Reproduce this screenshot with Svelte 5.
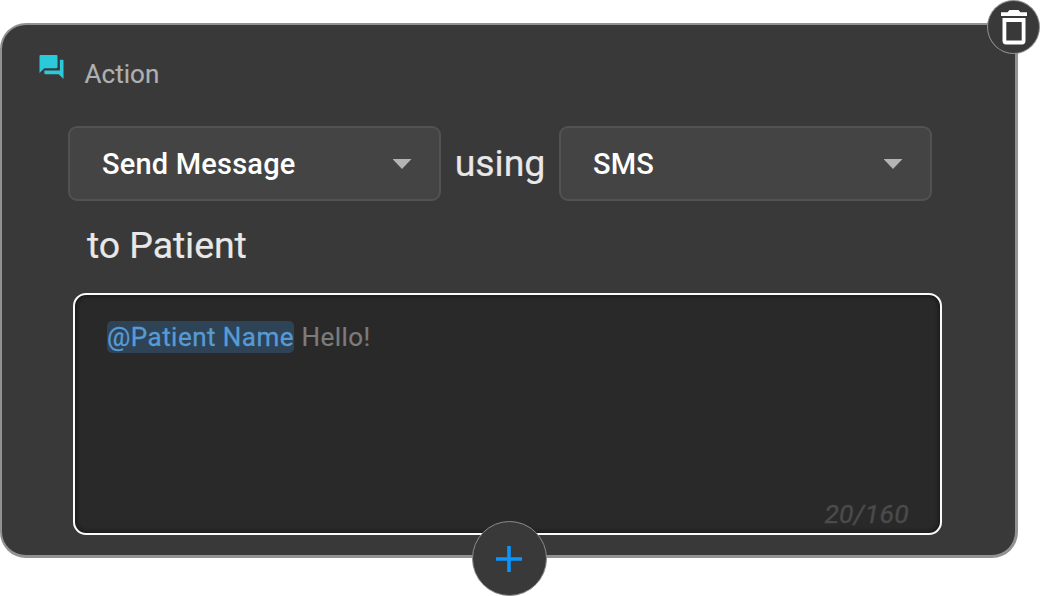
<script>
  let action = 'Send Message';
  let channel = 'SMS';
  let limit = 160;
  let used = 20;
</script>

<div class="stage">
  <section class="card">
    <header>
      <svg class="chat" viewBox="2 2 20 20"><path d="M21 6h-2v9H6v2c0 .55.45 1 1 1h11l4 4V7c0-.55-.45-1-1-1zm-4 6V3c0-.55-.45-1-1-1H3c-.55 0-1 .45-1 1v14l4-4h10c.55 0 1-.45 1-1z" /></svg>
      <span class="title">Action</span>
    </header>

    <div class="row">
      <button class="select"><span>{action}</span><i class="caret"></i></button>
      <span class="word using">using</span>
      <button class="select"><span>{channel}</span><i class="caret"></i></button>
    </div>

    <div class="word recipient">to Patient</div>

    <div class="message">
      <div class="body"><span class="mention">@Patient Name</span><span class="text">Hello!</span></div>
      <div class="count">{used}/{limit}</div>
    </div>
  </section>

  <button class="round trash" aria-label="Delete">
    <svg viewBox="0 0 26 35"><path fill-rule="evenodd" d="M0 2.2H6.6L8.5 0H17.5L19.4 2.2H26V6H0ZM1.5 8H24.5V30.8Q24.5 34.5 21 34.5H5Q1.5 34.5 1.5 30.8ZM5.3 12V30.4H20.7V12Z" /></svg>
  </button>
  <button class="round add" aria-label="Add">
    <svg viewBox="0 0 26 26"><path d="M11.2 0h3.6v11.2H26v3.6H14.8V26h-3.6V14.8H0v-3.6h11.2z" /></svg>
  </button>
</div>

<style>
  :global(body) {
    background: #fff;
    overflow: hidden;
  }
  .stage {
    position: relative;
    box-sizing: border-box;
    width: 1040px;
    height: 596px;
    padding-top: 23px;
    font-family: Roboto, sans-serif;
  }
  button {
    font: inherit;
    margin: 0;
    padding: 0;
  }
  .card {
    box-sizing: border-box;
    width: 1018px;
    height: 535px;
    border: 3px solid #929292;
    border-top-width: 2px;
    border-left-width: 2px;
    border-radius: 26px;
    background: #393939;
  }
  header {
    display: flex;
    align-items: flex-start;
    height: 101px;
    padding-left: 37px;
    box-sizing: border-box;
  }
  .chat {
    width: 25px;
    height: 24px;
    margin-top: 30px;
    fill: #2bcadb;
  }
  .title {
    margin: 34px 0 0 20.5px;
    font-size: 26px;
    line-height: 30px;
    letter-spacing: 0.05px;
    color: #b0b0b0;
    -webkit-text-stroke: 0.2px #b0b0b0;
  }
  .row {
    display: flex;
    align-items: center;
    padding-left: 66px;
  }
  .select {
    box-sizing: border-box;
    display: flex;
    align-items: center;
    justify-content: space-between;
    width: 373px;
    height: 75px;
    padding: 1px 27.5px 0 32px;
    border: 2px solid #525252;
    border-radius: 9px;
    background: #444;
    color: #fff;
    font-size: 29px;
    font-weight: 500;
    letter-spacing: 0.2px;
  }
  .caret {
    width: 19px;
    height: 10px;
    background: #b4b4b4;
    clip-path: polygon(0 0, 100% 0, 50% 100%);
  }
  .word {
    font-size: 37.5px;
    line-height: 44px;
    letter-spacing: -0.1px;
    color: #e8e8e8;
    -webkit-text-stroke: 0.2px #e8e8e8;
  }
  .using {
    width: 118px;
    padding-bottom: 2px;
    text-align: center;
  }
  .recipient {
    margin: 22px 0 0 85px;
  }
  .message {
    box-sizing: border-box;
    display: flex;
    flex-direction: column;
    justify-content: space-between;
    width: 869px;
    height: 242px;
    margin: 26px 0 0 71px;
    padding: 26px 31px 3px 32px;
    border: 2px solid #fafafa;
    border-radius: 13px;
    background: #292929;
    box-shadow: inset 0 0 4px 1px #151515;
  }
  .body {
    display: flex;
    gap: 7.5px;
    font-size: 26px;
    line-height: 32px;
    letter-spacing: 0.46px;
  }
  .mention {
    border-radius: 5px;
    background: #2e4355;
    color: #579bd6;
    -webkit-text-stroke: 0.3px #579bd6;
  }
  .text {
    color: #7c7c7c;
    -webkit-text-stroke: 0.2px #7c7c7c;
  }
  .count {
    align-self: flex-end;
    font-size: 26.5px;
    line-height: 32px;
    font-style: italic;
    letter-spacing: 0.3px;
    color: #4b4b4b;
    -webkit-text-stroke: 0.4px #4b4b4b;
  }
  .round {
    position: absolute;
    box-sizing: border-box;
    display: flex;
    align-items: center;
    justify-content: center;
    border-radius: 50%;
    background: #393939;
  }
  .trash {
    left: 987px;
    top: 0;
    width: 53px;
    height: 54px;
    border: 1.5px solid #929292;
  }
  .trash svg {
    width: 26px;
    height: 35px;
    fill: #fff;
  }
  .add {
    left: 472px;
    top: 521px;
    width: 75px;
    height: 75px;
    border: 1.5px solid #8c8c8c;
  }
  .add svg {
    width: 26px;
    height: 26px;
    margin-right: 2px;
    fill: #0b94fb;
  }
</style>
